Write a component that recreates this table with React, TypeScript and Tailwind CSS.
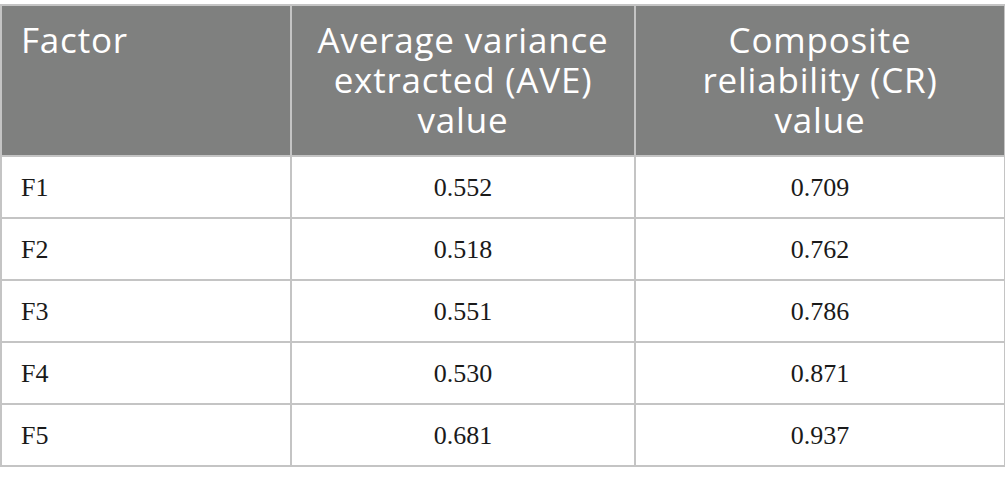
import React from "react";

const rows = [
  ["F1", "0.552", "0.709"],
  ["F2", "0.518", "0.762"],
  ["F3", "0.551", "0.786"],
  ["F4", "0.530", "0.871"],
  ["F5", "0.681", "0.937"],
];

export default function App() {
  return (
    <div className="w-[1005px] h-[482px] bg-white pt-[4px]">
      <table className="w-[1004px] border-collapse table-fixed">
        <colgroup>
          <col className="w-[290px]" />
          <col className="w-[344px]" />
          <col className="w-[370px]" />
        </colgroup>
        <thead>
          <tr className="bg-[#7f807f] text-white h-[151px] font-['Open_Sans',sans-serif] text-[35px] leading-[40px] tracking-[0.8px]">
            <th className="border-2 border-[#c4c4c4] align-top text-left font-normal pl-[19px] pt-[14px]">Factor</th>
            <th className="border-2 border-[#c4c4c4] align-top text-center font-normal px-[16px] pt-[14px]">
              Average variance extracted (AVE) value
            </th>
            <th className="border-2 border-[#c4c4c4] align-top text-center font-normal px-[56px] pt-[14px]">
              Composite reliability (CR) value
            </th>
          </tr>
        </thead>
        <tbody className="font-['Liberation_Serif',serif] text-[26px] text-[#1a1a1a]">
          {rows.map((r) => (
            <tr key={r[0]} className="h-[62px]">
              <td className="border-2 border-[#c4c4c4] pl-[19px]">{r[0]}</td>
              <td className="border-2 border-[#c4c4c4] text-center">{r[1]}</td>
              <td className="border-2 border-[#c4c4c4] text-center">{r[2]}</td>
            </tr>
          ))}
        </tbody>
      </table>
    </div>
  );
}
